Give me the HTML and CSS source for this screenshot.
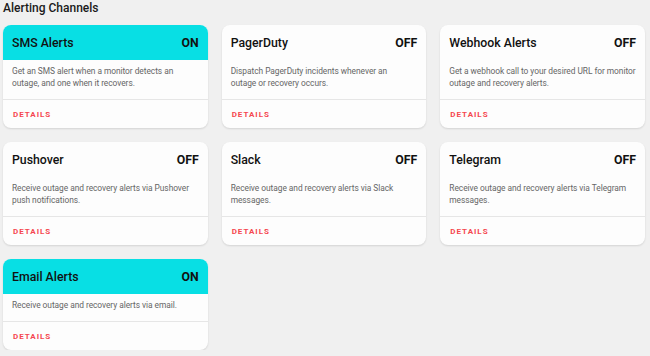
FILE: index.html
```html
<!DOCTYPE html>
<html>
<head>
<meta charset="utf-8">
<link rel="stylesheet" href="styles.css">
</head>
<body>
<div class="page">
  <h2 class="heading">Alerting Channels</h2>
  <div class="grid">
    <div class="card on">
      <div class="card-head"><span class="name">SMS Alerts</span><span class="state">ON</span></div>
      <p class="desc">Get an SMS alert when a monitor detects an outage, and one when it recovers.</p>
      <div class="foot"><a class="details">DETAILS</a></div>
    </div>
    <div class="card">
      <div class="card-head"><span class="name">PagerDuty</span><span class="state">OFF</span></div>
      <p class="desc">Dispatch PagerDuty incidents whenever an<br>outage or recovery occurs.</p>
      <div class="foot"><a class="details">DETAILS</a></div>
    </div>
    <div class="card">
      <div class="card-head"><span class="name">Webhook Alerts</span><span class="state">OFF</span></div>
      <p class="desc">Get a webhook call to your desired URL for monitor outage and recovery alerts.</p>
      <div class="foot"><a class="details">DETAILS</a></div>
    </div>
    <div class="card">
      <div class="card-head"><span class="name">Pushover</span><span class="state">OFF</span></div>
      <p class="desc">Receive outage and recovery alerts via Pushover push notifications.</p>
      <div class="foot"><a class="details">DETAILS</a></div>
    </div>
    <div class="card">
      <div class="card-head"><span class="name">Slack</span><span class="state">OFF</span></div>
      <p class="desc">Receive outage and recovery alerts via Slack messages.</p>
      <div class="foot"><a class="details">DETAILS</a></div>
    </div>
    <div class="card">
      <div class="card-head"><span class="name">Telegram</span><span class="state">OFF</span></div>
      <p class="desc">Receive outage and recovery alerts via Telegram messages.</p>
      <div class="foot"><a class="details">DETAILS</a></div>
    </div>
    <div class="card on">
      <div class="card-head"><span class="name">Email Alerts</span><span class="state">ON</span></div>
      <p class="desc">Receive outage and recovery alerts via email.</p>
      <div class="foot"><a class="details">DETAILS</a></div>
    </div>
  </div>
</div>
</body>
</html>
```
FILE: styles.css
```css
html, body {
  margin: 0;
  padding: 0;
  background: #f0f0f0;
}
body {
  font-family: Roboto, "Noto Sans", sans-serif;
  color: #111;
}
.page {
  padding: 1px 5px 0 3px;
}
.heading {
  margin: 0;
  font-size: 12px;
  font-weight: 500;
  line-height: 15px;
  color: #1a1a1a;
}
.grid {
  margin-top: 9px;
  display: grid;
  grid-template-columns: repeat(3, 1fr);
  column-gap: 14px;
  row-gap: 14px;
}
.card {
  background: #fdfdfd;
  border-radius: 8px;
  box-shadow: 0 1px 2px rgba(0,0,0,0.12);
  overflow: hidden;
  display: flex;
  flex-direction: column;
}
.card-head {
  height: 35px;
  display: flex;
  align-items: center;
  justify-content: space-between;
  padding: 0 9px;
}
.card.on .card-head {
  background: #08dfe4;
}
.name {
  font-size: 12.3px;
  font-weight: 500;
}
.state {
  font-size: 12.3px;
  font-weight: 700;
}
.desc {
  flex: 1;
  margin: 0;
  padding: 5px 8px 10px 9px;
  font-size: 8.4px;
  letter-spacing: -0.05px;
  line-height: 12px;
  color: #666;
  border-bottom: 1px solid #e6e6e6;
}
.foot {
  height: 28px;
  display: flex;
  align-items: center;
  padding: 0 9px 0 10px;
}
.details {
  font-size: 8px;
  font-weight: 700;
  letter-spacing: 1px;
  color: #f5474f;
}
```
